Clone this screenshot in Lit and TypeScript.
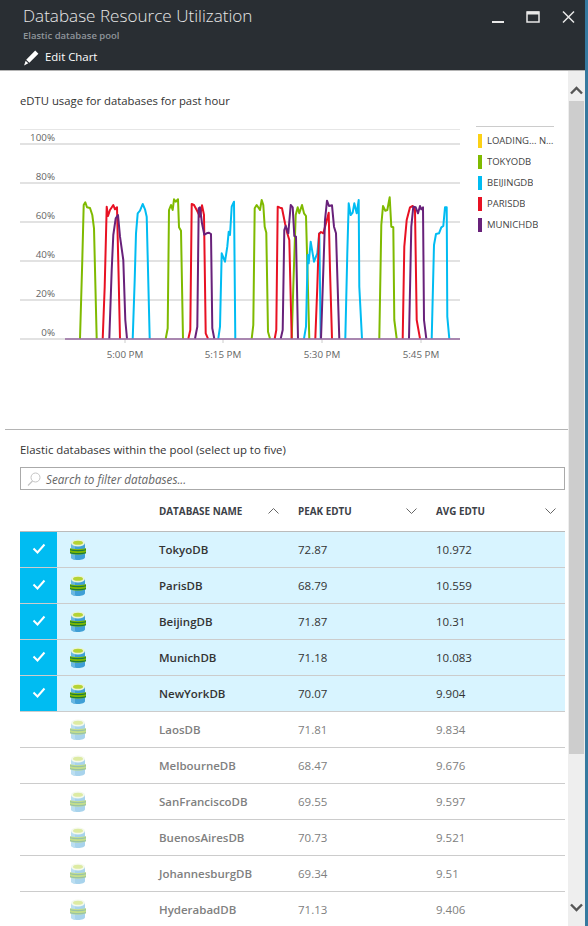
import { LitElement, css, html, svg } from "lit";
import { customElement } from "lit/decorators.js";

type Db = { name: string; peak: string; avg: string; selected?: boolean };

const databases: Db[] = [
    { name: "TokyoDB", peak: "72.87", avg: "10.972", selected: true },
    { name: "ParisDB", peak: "68.79", avg: "10.559", selected: true },
    { name: "BeijingDB", peak: "71.87", avg: "10.31", selected: true },
    { name: "MunichDB", peak: "71.18", avg: "10.083", selected: true },
    { name: "NewYorkDB", peak: "70.07", avg: "9.904", selected: true },
    { name: "LaosDB", peak: "71.81", avg: "9.834" },
    { name: "MelbourneDB", peak: "68.47", avg: "9.676" },
    { name: "SanFranciscoDB", peak: "69.55", avg: "9.597" },
    { name: "BuenosAiresDB", peak: "70.73", avg: "9.521" },
    { name: "JohannesburgDB", peak: "69.34", avg: "9.51" },
    { name: "HyderabadDB", peak: "71.13", avg: "9.406" },
];

const legend = [
    { label: "LOADING... NEWYORKDB", color: "#fcd116" },
    { label: "TOKYODB", color: "#7fba00" },
    { label: "BEIJINGDB", color: "#00bcf2" },
    { label: "PARISDB", color: "#e81123" },
    { label: "MUNICHDB", color: "#68217a" },
];

// traced bursts, x/y at 3x, each with the x offset of the crop it was read from
const series: { color: string; bursts: [number, number[]][] }[] = [
    {
        color: "#7fba00",
        bursts: [
            [0, [240, 656, 247, 420, 251, 255, 256, 247, 261, 262, 270, 264, 277, 285, 282, 325, 290, 656]],
            [0, [497, 656, 503, 625, 507, 270, 513, 255, 518, 270, 522, 238, 527, 245, 534, 238, 537, 322, 543, 332, 549, 656]],
            [240, [35, 656, 40, 615, 44, 265, 50, 255, 60, 270, 65, 240, 70, 255, 74, 320, 79, 338, 84, 635, 90, 656]],
            [240, [155, 656, 160, 500, 167, 285, 173, 262, 178, 280, 186, 255, 192, 280, 198, 288, 208, 656]],
            [240, [418, 656, 424, 315, 429, 258, 436, 272, 442, 270, 449, 232, 454, 320, 460, 322, 463, 600, 470, 656]],
        ],
    },
    {
        color: "#00bcf2",
        bursts: [
            [0, [398, 656, 404, 480, 408, 340, 413, 280, 420, 272, 428, 252, 435, 268, 440, 290, 449, 656]],
            [0, [655, 656, 660, 620, 665, 400, 675, 425, 682, 380, 686, 335, 690, 345, 695, 260, 702, 245, 706, 656]],
            [240, [192, 656, 198, 620, 203, 405, 206, 430, 212, 365, 222, 425, 232, 400, 238, 340, 242, 656]],
            [240, [316, 656, 322, 400, 326, 250, 332, 285, 338, 278, 343, 250, 350, 280, 356, 240, 358, 500, 366, 656]],
            [240, [575, 656, 582, 375, 588, 342, 597, 340, 604, 322, 610, 318, 615, 262, 620, 262, 622, 590, 628, 656]],
        ],
    },
    {
        color: "#e81123",
        bursts: [
            [0, [308, 656, 314, 500, 320, 260, 324, 288, 330, 270, 340, 255, 345, 268, 351, 262, 356, 480, 360, 656]],
            [0, [565, 656, 571, 630, 575, 252, 582, 255, 590, 270, 600, 290, 606, 256, 612, 285, 617, 640, 624, 656]],
            [240, [104, 656, 109, 630, 113, 260, 120, 263, 126, 265, 135, 310, 142, 340, 148, 360, 155, 656]],
            [240, [226, 656, 232, 500, 237, 342, 243, 336, 250, 340, 258, 310, 266, 278, 270, 450, 276, 656]],
            [240, [488, 656, 493, 380, 500, 300, 510, 262, 518, 258, 525, 270, 530, 600, 540, 656]],
        ],
    },
    {
        color: "#68217a",
        bursts: [
            [0, [328, 656, 335, 450, 340, 345, 347, 295, 354, 285, 360, 350, 370, 420, 376, 600, 381, 656]],
            [0, [585, 656, 592, 620, 596, 265, 600, 262, 606, 310, 613, 344, 620, 340, 626, 338, 633, 342, 637, 625, 643, 656]],
            [240, [122, 656, 128, 630, 133, 330, 137, 318, 145, 340, 152, 255, 158, 262, 163, 348, 168, 350, 174, 656]],
            [240, [243, 656, 249, 480, 255, 300, 261, 242, 267, 258, 276, 256, 282, 320, 288, 340, 298, 656]],
            [240, [507, 656, 514, 320, 520, 260, 527, 262, 534, 280, 540, 258, 544, 268, 549, 262, 552, 600, 559, 656]],
        ],
    },
];

const toPoints = ([base, raw]: [number, number[]]) => {
    const out: string[] = [];
    for (let i = 0; i < raw.length; i += 2) {
        out.push(`${(base + raw[i] / 3).toFixed(1)},${(120 + raw[i + 1] / 3).toFixed(1)}`);
    }
    return out.join(" ");
};

const gridLines = [
    { y: 144, label: "100%" },
    { y: 183, label: "80%" },
    { y: 222, label: "60%" },
    { y: 261, label: "40%" },
    { y: 300, label: "20%" },
    { y: 339, label: "0%" },
];

const ticks = [
    { x: 125, label: "5:00 PM" },
    { x: 223, label: "5:15 PM" },
    { x: 322, label: "5:30 PM" },
    { x: 421, label: "5:45 PM" },
];

const chevron = (up = false) => html`<svg class="sort" width="11" height="6" viewBox="0 0 11 6">
    <path d=${up ? "M.5 5.5l5-5 5 5" : "M.5 .5l5 5 5-5"} fill="none" stroke="#666" stroke-width="1"></path>
</svg>`;

const dbIcon = html`<svg class="db" width="16" height="22" viewBox="0 0 16 22">
    <path d="M1 4v14c0 2 3 3 7 3s7-1 7-3V4z" fill="#3f9fd6"></path>
    <path d="M1 4v14c0 2 2 2.600 4 2.900V4z" fill="#69b7e2"></path>
    <ellipse cx="8" cy="4" rx="7" ry="3.400" fill="#e8f3d8"></ellipse>
    <ellipse cx="8" cy="3.800" rx="5" ry="2" fill="#b5d334"></ellipse>
    <path d="M0 9c2 1.500 13 1.500 16 0v5c-3 2-14 2-16 0z" fill="#7fba00"></path>
    <path d="M0 10.500c3 1.500 13 1.500 16 0M0 13.500c3 1.500 13 1.500 16 0" fill="none" stroke="#1e7a3c" stroke-width="1.300"></path>
</svg>`;

@customElement("app-root")
export class AppRoot extends LitElement {
    static styles = css`
        :host {
            display: block;
            width: 588px;
            height: 926px;
            overflow: hidden;
            background: #fff;
            color: #333;
            font-family: "Open Sans", "Liberation Sans", sans-serif;
        }

        .blade {
            display: flex;
            flex-direction: column;
            height: 926px;
            border-right: 3px solid #36799f;
            box-sizing: border-box;
        }

        .top {
            flex: none;
            display: flex;
            justify-content: space-between;
            height: 70px;
            box-sizing: border-box;
            padding: 3px 0 0 23px;
            background: #292e33;
            color: #fff;
        }

        .title {
            font-size: 17.100px;
            font-weight: 300;
            line-height: 26px;
            color: #e8e8e8;
        }

        .subtitle {
            font-size: 9.500px;
            font-weight: 600;
            line-height: 13px;
            color: #8f959b;
        }

        .command {
            display: flex;
            align-items: center;
            gap: 5px;
            margin-top: 5px;
            font-size: 11.400px;
            line-height: 20px;
        }

        .controls {
            display: flex;
            gap: 22px;
            padding: 7px 10px 0 0;
        }

        .controls svg {
            display: block;
        }

        .body {
            flex: 1;
            display: flex;
            min-height: 0;
            border-top: 1px solid #b4b4b4;
        }

        .content {
            flex: 1;
            min-width: 0;
            overflow: hidden;
        }

        .scrollbar {
            flex: none;
            display: flex;
            flex-direction: column;
            align-items: center;
            width: 17px;
            background: #eee;
        }

        .arrow {
            flex: none;
            margin-top: 15px;
        }

        .thumb {
            flex: none;
            width: 15px;
            height: 653px;
            margin-top: 6px;
            background: #cdcdcd;
        }

        .arrow.down {
            margin-top: 149px;
        }

        .chart-section {
            height: 359px;
            box-sizing: border-box;
            padding-top: 21px;
            border-bottom: 1px solid #b4b4b4;
            margin-left: 5px;
        }

        .chart-title {
            margin-left: 15px;
            font-size: 11.300px;
            line-height: 18px;
            color: #333;
        }

        .chart-row {
            display: flex;
            margin-top: 10px;
            margin-left: -5px;
        }

        .chart {
            display: block;
            flex: none;
        }

        .chart text {
            font-size: 9.800px;
            fill: #666;
        }

        .legend {
            flex: none;
            width: 78px;
            height: 104px;
            margin: 6px 0 0 6px;
            border-top: 1px solid #ccc;
            box-sizing: border-box;
            padding-top: 3px;
        }

        .legend-item {
            display: flex;
            align-items: center;
            gap: 5px;
            height: 21px;
            font-size: 9.500px;
            color: #444;
        }

        .swatch {
            flex: none;
            width: 4px;
            height: 14px;
            margin-left: 2px;
        }

        .legend-label {
            overflow: hidden;
            white-space: nowrap;
            text-overflow: ellipsis;
        }

        .pool {
            padding-left: 20px;
        }

        .pool-title {
            padding-top: 11px;
            font-size: 11.400px;
            line-height: 18px;
            color: #333;
        }

        .search {
            display: flex;
            align-items: center;
            gap: 5px;
            width: 545px;
            height: 23px;
            margin-top: 8px;
            box-sizing: border-box;
            padding-left: 6px;
            border: 1px solid #aaa;
            font-size: 11.700px;
            font-style: italic;
            color: #666;
        }

        .table {
            width: 545px;
        }

        .row {
            display: grid;
            grid-template-columns: 37px 102px 139px 138px 1fr;
            align-items: center;
            height: 36px;
            box-sizing: border-box;
            border-bottom: 1px solid #ccc;
            font-size: 11.500px;
            color: #808080;
        }

        .row.head {
            height: 42px;
            border-bottom-color: #bbb;
            font-size: 9.900px;
            font-weight: 700;
            color: #3c4147;
        }

        .head-cell {
            display: flex;
            align-items: center;
            justify-content: space-between;
            padding-right: 19px;
        }

        .head-cell.last {
            padding-right: 9px;
        }

        .row.selected {
            background: #d8f4ff;
            color: #333;
        }

        .check {
            display: flex;
            align-items: center;
            justify-content: center;
            height: 35px;
            box-sizing: border-box;
            padding-bottom: 3px;
        }

        .selected .check {
            background: #00bcf2;
        }

        .icon-cell {
            display: flex;
            padding-left: 13px;
        }

        .db {
            display: block;
        }

        .row:not(.selected) .db {
            opacity: 0.45;
        }

        .name {
            font-weight: 600;
        }
    `;

    private renderChart() {
        return html`<svg class="chart" width="470" height="250" viewBox="0 120 470 250">
            <line x1="20" x2="460" y1="129.500" y2="129.500" stroke="#e6e6e6"></line>
            ${gridLines.map(
                (g) => svg`
                    <line x1="20" x2="460" y1=${g.y} y2=${g.y} stroke="#e2e2e2" stroke-width="2"></line>
                    <text x="55" y=${g.y - 3} text-anchor="end">${g.label}</text>
                `,
            )}
            ${ticks.map(
                (t) => svg`
                    <line x1=${t.x} x2=${t.x} y1="339" y2="343" stroke="#ccc"></line>
                    <text x=${t.x} y="358" text-anchor="middle">${t.label}</text>
                `,
            )}
            ${series.map((s) =>
                s.bursts.map(
                    (b) => svg`<polyline points=${toPoints(b)} fill="none" stroke=${s.color} stroke-width="2" stroke-linejoin="round"></polyline>`,
                ),
            )}
            <line x1="65" x2="460" y1="339" y2="339" stroke="#96689f" stroke-width="1.500"></line>
        </svg>`;
    }

    private renderRow(db: Db) {
        return html`<div class="row ${db.selected ? "selected" : ""}">
            <div class="check">
                ${db.selected
                    ? html`<svg width="14" height="11" viewBox="0 0 14 11">
                          <path d="M1.500 5.500l4 4 7-8" fill="none" stroke="#fff" stroke-width="2"></path>
                      </svg>`
                    : ""}
            </div>
            <div class="icon-cell">${dbIcon}</div>
            <div class="name">${db.name}</div>
            <div>${db.peak}</div>
            <div>${db.avg}</div>
        </div>`;
    }

    render() {
        return html`<div class="blade">
            <header class="top">
                <div>
                    <div class="title">Database Resource Utilization</div>
                    <div class="subtitle">Elastic database pool</div>
                    <div class="command">
                        <svg width="17" height="17" viewBox="0 0 15 16">
                            <path d="M11 1.500l3 3-8.500 8.500-3-3zM2 11l2.500 2.500L.500 15.500z" fill="#fff"></path>
                        </svg>
                        Edit Chart
                    </div>
                </div>
                <div class="controls">
                    <svg width="12" height="14" viewBox="0 0 12 14">
                        <rect x="0" y="11" width="12" height="2" fill="#e8e8e8"></rect>
                    </svg>
                    <svg width="14" height="14" viewBox="0 0 14 14">
                        <rect x="1" y="2" width="12" height="10" fill="none" stroke="#e8e8e8" stroke-width="1.500"></rect>
                        <rect x="1" y="1.500" width="12" height="3" fill="#e8e8e8"></rect>
                    </svg>
                    <svg width="13" height="14" viewBox="0 0 13 14">
                        <path d="M1 1.500l11 11M12 1.500l-11 11" fill="none" stroke="#e8e8e8" stroke-width="1.500"></path>
                    </svg>
                </div>
            </header>
            <div class="body">
                <div class="content">
                    <section class="chart-section">
                        <div class="chart-title">eDTU usage for databases for past hour</div>
                        <div class="chart-row">
                            ${this.renderChart()}
                            <div class="legend">
                                ${legend.map(
                                    (l) => html`<div class="legend-item">
                                        <span class="swatch" style="background:${l.color}"></span>
                                        <span class="legend-label">${l.label}</span>
                                    </div>`,
                                )}
                            </div>
                        </div>
                    </section>
                    <section class="pool">
                        <div class="pool-title">Elastic databases within the pool (select up to five)</div>
                        <div class="search">
                            <svg width="14" height="14" viewBox="0 0 14 14">
                                <circle cx="8.500" cy="5.500" r="4.500" fill="none" stroke="#c4c4c4"></circle>
                                <path d="M5.500 9L1 13.500" stroke="#c4c4c4" stroke-width="1.300"></path>
                            </svg>
                            Search to filter databases...
                        </div>
                        <div class="table">
                            <div class="row head">
                                <div></div>
                                <div></div>
                                <div class="head-cell">DATABASE NAME ${chevron(true)}</div>
                                <div class="head-cell">PEAK EDTU ${chevron()}</div>
                                <div class="head-cell last">AVG EDTU ${chevron()}</div>
                            </div>
                            ${databases.map((db) => this.renderRow(db))}
                        </div>
                    </section>
                </div>
                <div class="scrollbar">
                    <svg class="arrow" width="13" height="9" viewBox="0 0 13 9">
                        <path d="M1 7.500l5.500-5.500 5.500 5.500" fill="none" stroke="#555" stroke-width="2.400"></path>
                    </svg>
                    <div class="thumb"></div>
                    <svg class="arrow down" width="13" height="9" viewBox="0 0 13 9">
                        <path d="M1 1.500l5.500 5.500 5.500-5.500" fill="none" stroke="#555" stroke-width="2.400"></path>
                    </svg>
                </div>
            </div>
        </div>`;
    }
}
